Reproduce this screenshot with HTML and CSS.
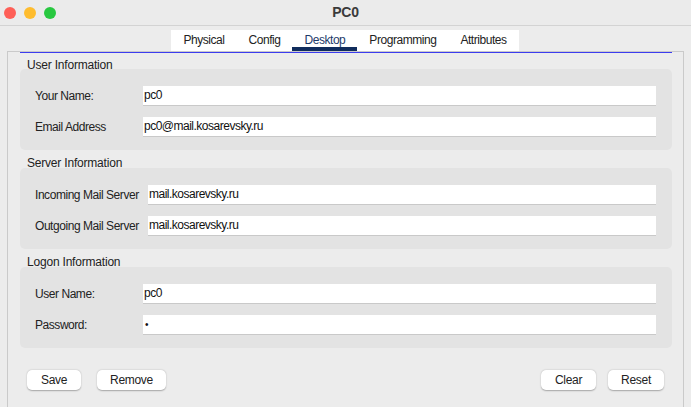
FILE: index.html
```html
<!DOCTYPE html>
<html>
<head>
<meta charset="utf-8">
<link rel="stylesheet" href="styles.css">
</head>
<body>
<div class="window">
  <div class="titlebar">
    <div class="lights">
      <span class="light red"></span>
      <span class="light yellow"></span>
      <span class="light green"></span>
    </div>
    <div class="title">PC0</div>
  </div>
  <div class="tabs">
    <div class="tabstrip">
      <div class="tab">Physical</div>
      <div class="tab">Config</div>
      <div class="tab active">Desktop</div>
      <div class="tab">Programming</div>
      <div class="tab">Attributes</div>
    </div>
  </div>
  <div class="frame">
    <div class="content">
      <div class="section">
        <div class="legend">User Information</div>
        <div class="box">
          <div class="row"><span class="label">Your Name:</span><div class="input">pc0</div></div>
          <div class="row"><span class="label">Email Address</span><div class="input">pc0@mail.kosarevsky.ru</div></div>
        </div>
      </div>
      <div class="section">
        <div class="legend">Server Information</div>
        <div class="box box-server">
          <div class="row"><span class="label">Incoming Mail Server</span><div class="input">mail.kosarevsky.ru</div></div>
          <div class="row"><span class="label">Outgoing Mail Server</span><div class="input">mail.kosarevsky.ru</div></div>
        </div>
      </div>
      <div class="section">
        <div class="legend">Logon Information</div>
        <div class="box">
          <div class="row"><span class="label">User Name:</span><div class="input">pc0</div></div>
          <div class="row"><span class="label">Password:</span><div class="input pw">•</div></div>
        </div>
      </div>
      <div class="buttons">
        <div class="group">
          <button class="btn btn-save">Save</button>
          <button class="btn btn-remove">Remove</button>
        </div>
        <div class="group group-right">
          <button class="btn btn-clear">Clear</button>
          <button class="btn btn-reset">Reset</button>
        </div>
      </div>
    </div>
  </div>
</div>
</body>
</html>
```
FILE: styles.css
```css
html, body {
  margin: 0;
  padding: 0;
  background: #ececec;
}
body {
  width: 691px;
  height: 407px;
  overflow: hidden;
  font-family: "Liberation Sans", Arial, sans-serif;
  font-size: 12px;
  color: #222;
}
.window {
  display: flex;
  flex-direction: column;
  height: 407px;
}
.titlebar {
  height: 25px;
  border-bottom: 1px solid #d3d3d3;
  display: flex;
  align-items: center;
  position: relative;
  background: #ebebeb;
}
.lights {
  display: flex;
  gap: 8px;
  padding-left: 4px;
}
.light {
  width: 12px;
  height: 12px;
  border-radius: 50%;
  display: block;
}
.red { background: #fe5f57; }
.yellow { background: #febc2e; }
.green { background: #28c840; }
.title {
  position: absolute;
  left: 0;
  right: 0;
  text-align: center;
  font-weight: bold;
  font-size: 14px;
  color: #3a3a3a;
  letter-spacing: -0.2px;
  top: 4px;
}
.tabs {
  display: flex;
  justify-content: center;
  padding-top: 4px;
  padding-right: 1px;
}
.tabstrip {
  display: flex;
  background: #fff;
  height: 21px;
}
.tab {
  padding: 1px 12px 0;
  line-height: 19px;
  letter-spacing: -0.45px;
  color: #222;
  border-bottom: 4px solid transparent;
  height: 16px;
}
.tab.active {
  color: #1d3a6a;
  border-bottom-color: #102c5c;
}
.frame {
  flex: 1;
  margin: 0 7px;
  border: 1px solid #cacaca;
  border-bottom: none;
  padding: 0 11px 0 12px;
}
.content {
  border-top: 1px solid #3c3cef;
  display: flex;
  flex-direction: column;
}
.legend {
  height: 16px;
  line-height: 24px;
  padding-left: 7px;
  letter-spacing: -0.2px;
  color: #222;
}
.section + .section .legend {
  height: 18px;
  line-height: 26px;
}
.box {
  background: #e3e3e3;
  border-radius: 5px;
  padding: 17px 16px 13px 15px;
  display: flex;
  flex-direction: column;
  gap: 11px;
}
.row {
  display: flex;
  align-items: center;
}
.label {
  width: 108px;
  flex: none;
  letter-spacing: -0.45px;
  color: #222;
}
.box-server .label {
  width: 113px;
}
.input {
  flex: 1;
  height: 19px;
  line-height: 19px;
  background: #fff;
  border-bottom: 1px solid #c9c9c9;
  padding-left: 1px;
  color: #111;
  letter-spacing: -0.5px;
}
.pw {
  padding-left: 2px;
  font-size: 10px;
}
.buttons {
  display: flex;
  justify-content: space-between;
  padding: 22px 8px 0 7px;
}
.group {
  display: flex;
  gap: 16px;
}
.group-right {
  gap: 12px;
}
.btn {
  font-family: "Liberation Sans", Arial, sans-serif;
  font-size: 12px;
  letter-spacing: -0.3px;
  color: #222;
  background: #fff;
  border: none;
  border-radius: 5px;
  height: 20px;
  padding: 0;
  box-shadow: 0 0.5px 1.5px rgba(0, 0, 0, 0.3);
}
.btn-save { width: 54px; }
.btn-remove { width: 69px; }
.btn-clear { width: 55px; }
.btn-reset { width: 56px; }
```
